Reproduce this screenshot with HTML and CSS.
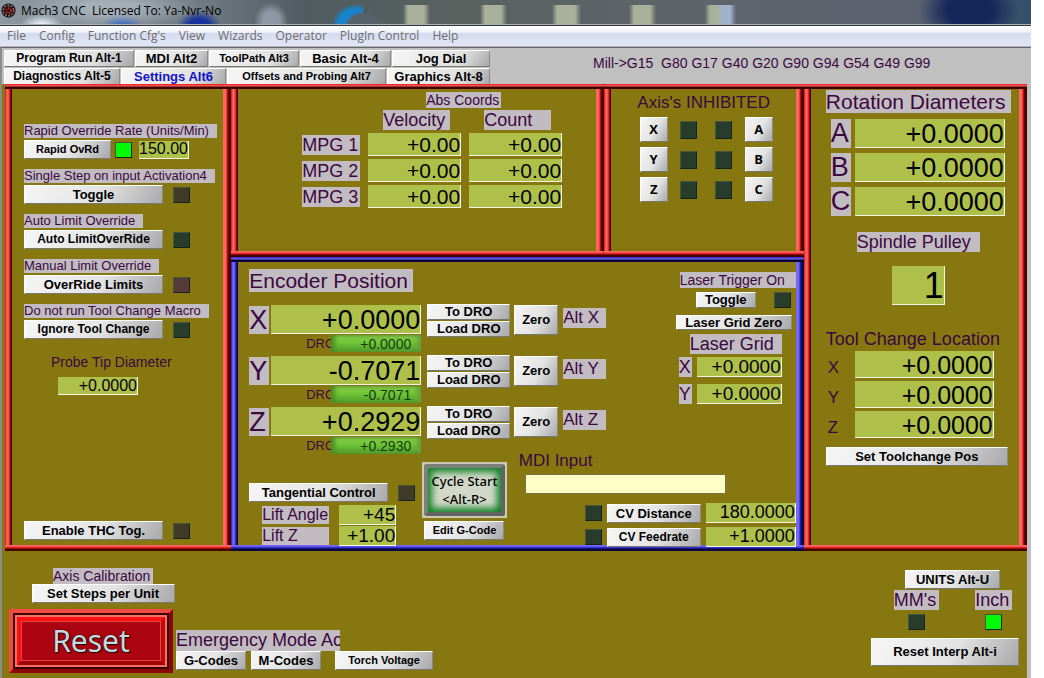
FILE: index.html
```
<!DOCTYPE html>
<html lang="en">
<head>
<meta charset="utf-8">
<title>Mach3 CNC</title>
<link rel="stylesheet" href="styles.css">
</head>
<body>
<div class="window">
  <header class="titlebar">
    <svg class="logo" viewBox="0 0 16 16" aria-hidden="true">
      <circle cx="8" cy="8" r="7.6" fill="#1c1414"/>
      <circle cx="8" cy="8" r="5.6" fill="none" stroke="#8d7f78" stroke-width="1.4" stroke-dasharray="2 1.5"/>
      <path d="M8 2.5 10 6l3.5 1.5L10.5 10 9 13.5 8 10.500 4 12l2-3.500L3 6l4 .5z" fill="#9c2020"/>
      <circle cx="8" cy="8" r="1.7" fill="#1c1010"/>
    </svg>
    <h1 class="title">Mach3 CNC&nbsp; Licensed To: Ya-Nvr-No</h1>
  </header>
  <nav class="menu">
    <a href="#">File</a><a href="#">Config</a><a href="#">Function Cfg's</a><a href="#">View</a><a href="#">Wizards</a><a href="#">Operator</a><a href="#">PlugIn Control</a><a href="#">Help</a>
  </nav>

  <div class="screen">
    <div class="toolbar">
      <div class="tabs">
        <div class="tab-row first">
          <button class="btn mid">Program Run Alt-1</button>
          <button class="btn">MDI Alt2</button>
          <button class="btn small">ToolPath Alt3</button>
          <button class="btn">Basic Alt-4</button>
          <button class="btn">Jog Dial</button>
        </div>
        <div class="tab-row second">
          <button class="btn mid">Diagnostics Alt-5</button>
          <button class="btn current">Settings Alt6</button>
          <button class="btn small">Offsets and Probing Alt7</button>
          <button class="btn">Graphics Alt-8</button>
        </div>
      </div>
      <div class="modes">Mill-&gt;G15&nbsp; G80 G17 G40 G20 G90 G94 G54 G49 G99</div>
    </div>

    <main class="panels">
      <section class="panel overrides">
        <div class="group">
          <label class="tag t13" for="rapid">Rapid Override Rate (Units/Min)</label>
          <div class="line">
            <button class="btn small rapid">Rapid OvRd</button>
            <span class="led on"></span>
            <input class="dro d16 rate" id="rapid" value="150.00">
          </div>
        </div>
        <div class="group">
          <span class="tag t13">Single Step on input Activation4</span>
          <div class="line"><button class="btn">Toggle</button><span class="led amber"></span></div>
        </div>
        <div class="group">
          <span class="tag t13">Auto Limit Override</span>
          <div class="line"><button class="btn mid">Auto LimitOverRide</button><span class="led"></span></div>
        </div>
        <div class="group">
          <span class="tag t13">Manual Limit Override</span>
          <div class="line"><button class="btn">OverRide Limits</button><span class="led red"></span></div>
        </div>
        <div class="group">
          <span class="tag t13">Do not run Tool Change Macro</span>
          <div class="line"><button class="btn mid">Ignore Tool Change</button><span class="led"></span></div>
        </div>
        <div class="probe">
          <label class="plain t14" for="probe">Probe Tip Diameter</label>
          <input class="dro d16" id="probe" value="+0.0000">
        </div>
        <div class="line thc"><button class="btn">Enable THC Tog.</button><span class="led amber"></span></div>
      </section>

      <div class="center">
        <section class="panel mpg">
          <span class="tag t14">Abs Coords</span>
          <table class="mpg-table">
            <thead>
              <tr><td></td><th scope="col"><span class="tag t18" id="vel">Velocity</span></th><th scope="col"><span class="tag t18" id="cnt">Count</span></th></tr>
            </thead>
            <tbody>
              <tr><th scope="row"><span class="tag t18" id="m1">MPG 1</span></th><td><input class="dro d21" aria-labelledby="m1 vel" value="+0.00"></td><td><input class="dro d21" aria-labelledby="m1 cnt" value="+0.00"></td></tr>
              <tr><th scope="row"><span class="tag t18" id="m2">MPG 2</span></th><td><input class="dro d21" aria-labelledby="m2 vel" value="+0.00"></td><td><input class="dro d21" aria-labelledby="m2 cnt" value="+0.00"></td></tr>
              <tr><th scope="row"><span class="tag t18" id="m3">MPG 3</span></th><td><input class="dro d21" aria-labelledby="m3 vel" value="+0.00"></td><td><input class="dro d21" aria-labelledby="m3 cnt" value="+0.00"></td></tr>
            </tbody>
          </table>
        </section>

        <section class="panel inhibit">
          <h2 class="plain t17">Axis's INHIBITED</h2>
          <div class="inhibit-grid">
            <button class="btn axis">X</button><span class="led"></span><span class="led"></span><button class="btn axis">A</button>
            <button class="btn axis">Y</button><span class="led"></span><span class="led"></span><button class="btn axis">B</button>
            <button class="btn axis">Z</button><span class="led"></span><span class="led"></span><button class="btn axis">C</button>
          </div>
        </section>

        <section class="panel blue encoder">
          <div class="enc-top">
            <div class="positions">
              <h2 class="tag t21">Encoder Position</h2>
              <div class="pos">
                <label class="tag letter" for="ex">X</label>
                <div class="readout">
                  <input class="dro d27" id="ex" value="+0.0000">
                  <div class="sub"><label class="plain" for="gx">DRO</label><input class="green" id="gx" value="+0.0000"></div>
                </div>
                <div class="stack"><button class="btn">To DRO</button><button class="btn">Load DRO</button></div>
                <button class="btn zero">Zero</button>
                <span class="tag t17">Alt X</span>
              </div>
              <div class="pos">
                <label class="tag letter" for="ey">Y</label>
                <div class="readout">
                  <input class="dro d27" id="ey" value="-0.7071">
                  <div class="sub"><label class="plain" for="gy">DRO</label><input class="green" id="gy" value="-0.7071"></div>
                </div>
                <div class="stack"><button class="btn">To DRO</button><button class="btn">Load DRO</button></div>
                <button class="btn zero">Zero</button>
                <span class="tag t17">Alt Y</span>
              </div>
              <div class="pos">
                <label class="tag letter" for="ez">Z</label>
                <div class="readout">
                  <input class="dro d27" id="ez" value="+0.2929">
                  <div class="sub"><label class="plain" for="gz">DRO</label><input class="green" id="gz" value="+0.2930"></div>
                </div>
                <div class="stack"><button class="btn">To DRO</button><button class="btn">Load DRO</button></div>
                <button class="btn zero">Zero</button>
                <span class="tag t17">Alt Z</span>
              </div>
            </div>
            <div class="laser">
              <span class="tag t14 trigger">Laser Trigger On</span>
              <div class="line laser-toggle"><button class="btn">Toggle</button><span class="led"></span></div>
              <button class="btn grid-zero">Laser Grid Zero</button>
              <h2 class="tag t18 grid-title">Laser Grid</h2>
              <div class="laser-row"><label class="tag t18" for="lx">X</label><input class="dro d19" id="lx" value="+0.0000"></div>
              <div class="laser-row"><label class="tag t18" for="ly">Y</label><input class="dro d19" id="ly" value="+0.0000"></div>
            </div>
          </div>
          <div class="enc-bottom">
            <div class="tangential">
              <div class="line"><button class="btn">Tangential Control</button><span class="led amber"></span></div>
              <div class="lift">
                <label class="tag t16" for="la">Lift Angle</label><input class="dro d19" id="la" value="+45">
                <label class="tag t16" for="lz">Lift Z</label><input class="dro d19" id="lz" value="+1.00">
              </div>
            </div>
            <div class="run">
              <button class="cycle"><span>Cycle Start<br>&lt;Alt-R&gt;</span></button>
              <button class="btn small">Edit G-Code</button>
            </div>
            <div class="mdi">
              <label class="plain t17" for="mdi">MDI Input</label>
              <input class="mdi-input" id="mdi">
              <div class="cv">
                <span class="led"></span><button class="btn" id="cvd">CV Distance</button><input class="dro d18" aria-labelledby="cvd" value="180.0000">
                <span class="led"></span><button class="btn mid" id="cvf">CV Feedrate</button><input class="dro d18" aria-labelledby="cvf" value="+1.0000">
              </div>
            </div>
          </div>
        </section>
      </div>

      <section class="panel rotation">
        <h2 class="tag t21">Rotation Diameters</h2>
        <div class="diameters">
          <label class="tag letter" for="ra">A</label><input class="dro d27" id="ra" value="+0.0000">
          <label class="tag letter" for="rb">B</label><input class="dro d27" id="rb" value="+0.0000">
          <label class="tag letter" for="rc">C</label><input class="dro d27" id="rc" value="+0.0000">
        </div>
        <label class="tag t18 pulley" for="sp">Spindle Pulley</label>
        <input class="dro d36" id="sp" value="1">
        <h2 class="plain t18 location">Tool Change Location</h2>
        <div class="toolchange">
          <label class="plain t17" for="tx">X</label><input class="dro d25" id="tx" value="+0.0000">
          <label class="plain t17" for="ty">Y</label><input class="dro d25" id="ty" value="+0.0000">
          <label class="plain t17" for="tz">Z</label><input class="dro d25" id="tz" value="+0.0000">
        </div>
        <button class="btn set-pos">Set Toolchange Pos</button>
      </section>
    </main>

    <footer class="bottom">
      <div class="calibration">
        <span class="tag t14">Axis Calibration</span>
        <button class="btn">Set Steps per Unit</button>
        <button class="reset"><span>Reset</span></button>
      </div>
      <div class="status">
        <div class="tag t18 message">Emergency Mode Ac</div>
        <div class="line"><button class="btn">G-Codes</button><button class="btn">M-Codes</button><button class="btn small torch">Torch Voltage</button></div>
      </div>
      <div class="units">
        <button class="btn">UNITS Alt-U</button>
        <div class="unit-row">
          <div class="unit"><span class="tag t18">MM's</span><span class="led"></span></div>
          <div class="unit"><span class="tag t18">Inch</span><span class="led on"></span></div>
        </div>
        <button class="btn interp">Reset Interp Alt-i</button>
      </div>
    </footer>
  </div>
</div>
</body>
</html>
```
FILE: styles.css
```
* { box-sizing: border-box; }

:root {
  --olive: #867711;
  --face: #c0c0c0;
  --ink: #3b083f;
  --lime: #afc04a;
}

body {
  margin: 0;
  padding-right: 13px;
  background: #fff;
  font-family: "Liberation Sans", Arial, sans-serif;
  color: #000;
}

h1, h2 { margin: 0; font-weight: 400; }
button, input { font-family: inherit; color: inherit; margin: 0; }
input { padding: 0; min-width: 0; border-radius: 0; }

.window {
  display: flex;
  flex-direction: column;
  min-height: 100vh;
}

/* title bar and menu */
.titlebar {
  display: flex;
  align-items: center;
  gap: 5px;
  height: 26px;
  padding: 0 0 4px 1px;
  border-bottom: 1px solid #33383d;
  box-shadow: inset 0 -1px #aab0b6;
  background:
    radial-gradient(ellipse 90px 20px at 110px 8px, #aeb9c2cc 30%, transparent 100%),
    radial-gradient(ellipse 22px 12px at 42px 26px, #e8eef4 20%, transparent 100%),
    radial-gradient(ellipse 20px 13px at 122px 26px, #2456b8 30%, transparent 100%),
    radial-gradient(ellipse 22px 15px at 199px 26px, #16329c 45%, transparent 100%),
    radial-gradient(ellipse 17px 20px at 271px 22px, #8e98a4 50%, transparent 100%),
    radial-gradient(ellipse 20px 16px at 363px 26px, #56626a 75%, transparent 90%),
    radial-gradient(ellipse 26px 23px at 356px 25px, #1784cc 70%, transparent 92%) 0 0 / 363px 100% no-repeat,
    linear-gradient(90deg, transparent 403px, #a9b19c 408px 424px, transparent 430px 480px, #a9b19c 485px 501px, transparent 507px 552px, #a9b19c 557px 575px, transparent 581px 629px, #a9b19c 634px 650px, transparent 656px 705px, #a9b19c 710px 718px, #9fb4cc 722px 730px, transparent 736px) 0 5px / 100% 20px no-repeat,
    radial-gradient(ellipse 50px 34px at 970px 10px, #14265a 45%, transparent 100%),
    linear-gradient(90deg, #8d979f, #6e7981 20%, #4f5b60 30%, #59625f 45%, #60646d 70%, #5c6270 88%, #35506a);
}
.logo { width: 15px; height: 15px; flex: none; }
.title { font: 12px/16px "Open Sans", sans-serif; color: #000; }
.menu {
  display: flex;
  gap: 13px;
  height: 21px;
  padding: 0 7px;
  border-bottom: 1px solid #aeb0b8;
  background: linear-gradient(#fff, #f1f3fa 30%, #d5dbef 38%, #e2e6f6);
}
.menu a { font: 12px/20px "Open Sans", sans-serif; color: #6d6d6d; text-decoration: none; }

.screen {
  flex: 1;
  display: flex;
  flex-direction: column;
  padding: 0 4px 0 0;
  border-top: 1px solid #666;
  border-left: 2px solid #8a8d8a;
  background: var(--face);
}

/* shared controls */
.btn {
  padding: 0 2px;
  border: 1px solid;
  border-color: #fff #8b8b85 #77776f #fff;
  background: linear-gradient(120deg, #f4f4f4 5%, #e3e3e3 55%, #a9a9ab);
  font-size: 13px;
  font-weight: 700;
  line-height: 17px;
  white-space: nowrap;
}
.btn.mid { font-size: 12px; }
.btn.small { font-size: 11px; }
.btn.axis { padding: 0; font: 700 13px/23px "Open Sans", sans-serif; }

.tag { display: inline-block; background: #c2bcc2; color: var(--ink); white-space: nowrap; overflow: hidden; }
.plain { color: var(--ink); white-space: nowrap; }
.t13 { font-size: 13px; line-height: 14px; padding-right: 8px; }
.t14 { font-size: 14px; line-height: 16px; }
.t16 { font-size: 16px; line-height: 18px; }
.t17 { font-size: 17px; line-height: 20px; }
.t18 { font-size: 18px; line-height: 20px; }
.t21 { font-size: 21px; line-height: 23px; }
.letter { font-size: 27px; line-height: 28px; width: 20px; }

.led {
  display: block;
  width: 17px;
  height: 16px;
  border: 1px solid;
  border-color: #49553b #16221a #16221a #49553b;
  background: #283c2c;
}
.led.on { background: #00fa08; }
.led.amber { background: #3f3b28; }
.led.red { background: #563a38; }

.dro {
  display: block;
  border: 0 solid #f1f2e8;
  border-width: 0 1px 1px 0;
  background: var(--lime);
  text-align: right;
}
.d16 { font-size: 16px; height: 18px; }
.d18 { font-size: 18px; height: 20px; }
.d19 { font-size: 19px; height: 20px; }
.d21 { font-size: 21px; height: 23px; width: 93px; padding-top: 2px; }
.d25 { font-size: 25px; height: 27px; padding-top: 2px; }
.d27 { font-size: 27px; height: 29px; width: 150px; padding-top: 2px; }
.d36 { font-size: 36px; height: 39px; width: 53px; padding-top: 2px; }

.line { display: flex; align-items: center; gap: 10px; }

/* beveled frame */
.panel {
  --hi: #fb6860;
  --mid: #e01212;
  --lo: #420000;
  background:
    linear-gradient(var(--mid), var(--hi) 2px, var(--lo) 3px, var(--lo)) top / 100% 5px no-repeat,
    linear-gradient(to top, var(--lo), var(--lo) 2px, var(--mid) 3px, var(--hi) 5px, var(--hi)) bottom / 100% 6px no-repeat,
    linear-gradient(to right, var(--mid), var(--hi) 2px, var(--hi) 3px, var(--mid) 5px, var(--lo) 6px) left / 7px 100% no-repeat,
    linear-gradient(to left, var(--lo), var(--lo) 2px, var(--mid) 4px, var(--hi) 5px, var(--hi)) right / 8px 100% no-repeat,
    var(--olive);
}
.panel.blue { --hi: #7468f4; --mid: #2620c0; --lo: #08063c; }

/* toolbar */
.toolbar { display: flex; height: 36px; padding: 2px 0 0 2px; }
.tabs { flex: none; width: 486px; display: grid; gap: 1px; align-content: start; }
.tab-row { display: grid; column-gap: 1px; }
.tab-row .btn { line-height: 15px; background: linear-gradient(120deg, #f4f4f4 5%, #e0e0e0 70%, #a9a9ab); }
.tab-row.first { grid-template-columns: 130fr 73fr 90fr 91fr 98fr; }
.tab-row.second { grid-template-columns: 116fr 105fr 159fr 103fr; }
.btn.current { color: #1212c8; }
.modes {
  flex: none;
  width: 342px;
  margin: 5px 0 0 103px;
  overflow: hidden;
  white-space: nowrap;
  font-size: 14px;
  line-height: 16px;
  color: var(--ink);
  align-self: flex-start;
}

.panels {
  display: grid;
  grid-template-columns: 226fr 572fr 223fr;
  padding-left: 3px;
  background: var(--olive);
}

/* overrides */
.overrides { display: flex; flex-direction: column; padding: 40px 10px 11px 19px; gap: 10px; }
.group { display: flex; flex-direction: column; align-items: flex-start; gap: 2px; }
.group .btn, .thc .btn { width: 139px; }
.group .rapid { width: 87px; }
.group .rapid + .led { margin: 0 -3px 0 -6px; }
.rate { width: 50px; }
.probe { display: flex; flex-direction: column; gap: 7px; padding: 5px 0 0 27px; }
.probe .dro { width: 80px; margin-left: 7px; }
.thc { margin-top: auto; }

/* center column */
.center { display: grid; grid-template-columns: 372fr 200fr; grid-template-rows: 173px auto; }
.mpg { padding: 8px 0 0 63px; }
.mpg > .tag { margin-left: 132px; padding-right: 1px; display: block; width: 75px; }
.mpg-table { border-spacing: 8px 3px; margin-top: -1px; }
.mpg-table td, .mpg-table th { padding: 0; text-align: left; font-weight: 400; vertical-align: middle; }
.mpg-table .tag { display: block; width: 58px; }
.mpg-table thead .tag { width: 67px; margin-left: 15px; }

.inhibit { display: flex; flex-direction: column; align-items: center; padding: 9px 0 0; }
.inhibit-grid {
  display: grid;
  grid-template-columns: 28px 28px 28px 28px;
  justify-items: center;
  align-items: center;
  column-gap: 7px;
  row-gap: 5px;
  margin-top: 4px;
  padding-left: 5px;
}
.inhibit-grid .led { height: 18px; }
.inhibit-grid .axis { width: 28px; }

.encoder { grid-column: 1 / -1; padding: 12px 8px 4px 18px; }
.enc-top { display: flex; justify-content: space-between; }
.positions .t21 { display: block; width: 164px; margin-bottom: 12px; }
.pos { display: flex; align-items: flex-start; height: 47px; }
.pos + .pos { margin-top: 4px; }
.pos > .letter { margin: 2px 2px 0 0; }
.readout { margin: 1px 6px 0 0; }
.sub { display: flex; justify-content: flex-end; align-items: center; margin-top: 1px; }
.sub label { width: 25px; overflow: hidden; font-size: 13px; line-height: 16px; }
.green {
  width: 90px;
  height: 17px;
  padding-right: 10px;
  border: 0;
  background: linear-gradient(#8fd04e, #6fc437 45%, #4f9c2a);
  box-shadow: inset 4px 0 4px #4c8d24, inset -4px 0 4px #6aa23a;
  color: #123c0c;
  font-size: 14px;
  text-align: right;
}
.stack { display: grid; gap: 1px; width: 83px; margin-right: 4px; }
.stack .btn { line-height: 14px; }
.zero { width: 44px; align-self: flex-start; margin: 1px 5px 0 0; line-height: 28px; }
.pos > .t17 { width: 43px; margin-top: 4px; }

.laser { display: flex; flex-direction: column; align-items: flex-start; padding: 3px 0 0; }
.laser .trigger { margin-left: 4px; width: 116px; }
.laser-toggle { margin: 4px 0 7px 20px; gap: 18px; }
.laser-toggle .btn { width: 60px; line-height: 14px; }
.grid-zero { width: 116px; line-height: 13px; }
.grid-title { margin: 4px 0 3px 14px; width: 92px; }
.laser-row { display: flex; gap: 5px; margin: 0 0 7px 3px; }
.laser-row .tag { width: 13px; }
.laser-row .dro { width: 85px; }

.enc-bottom { display: flex; justify-content: space-between; align-items: flex-start; }
.tangential { padding-top: 30px; }
.tangential .btn { width: 139px; }
.lift {
  display: grid;
  grid-template-columns: 67px 57px;
  column-gap: 10px;
  row-gap: 1px;
  align-items: center;
  margin: 3px 0 0 13px;
}
.run { display: flex; flex-direction: column; align-items: center; gap: 3px; padding-top: 9px; }
.run .btn { width: 80px; }
.cycle {
  width: 85px;
  padding: 0;
  border: 2px solid #cdc8b4;
  background: #cdc8b4;
}
.cycle span {
  display: block;
  padding: 4px 0;
  border: 4px solid;
  border-color: #7b8079 #60655f #60655f #7b8079;
  border-radius: 3px;
  background: #d2d8c8;
  box-shadow: inset 0 0 7px 4px #118026;
  font: 500 13px/18px "Noto Sans", sans-serif;
  white-space: nowrap;
}
.mdi { width: 282px; display: flex; flex-direction: column; align-items: flex-start; }
.mdi > label { margin: -2px 0 0 5px; }
.mdi-input { width: 201px; height: 20px; margin: 3px 0 9px 11px; border: 1px solid #77704a; background: #fdffc4; }
.cv {
  display: grid;
  grid-template-columns: 17px 94px 90px;
  gap: 4px;
  column-gap: 5px;
  align-self: flex-end;
  align-items: center;
}

/* rotation panel */
.rotation { padding: 6px 8px 0 22px; display: flex; flex-direction: column; align-items: flex-start; }
.rotation > .t21 { width: 185px; }
.diameters { display: grid; grid-template-columns: 20px 150px; gap: 5px 4px; margin: 6px 0 0 5px; }
.pulley { width: 123px; margin: 16px 0 14px 31px; }
.rotation .d36 { margin-left: 66px; }
.location { margin-top: 24px; }
.toolchange { display: grid; grid-template-columns: 26px 139px; gap: 3px 3px; align-items: center; padding-top: 2px; }
.toolchange label { padding: 6px 0 0 2px; line-height: 18px; }
.set-pos { width: 182px; margin-top: 9px; }

/* bottom strip */
.bottom {
  flex: 1;
  display: flex;
  align-items: flex-start;
  padding: 17px 8px 0 7px;
  background: var(--olive);
}
.calibration { width: 164px; display: flex; flex-direction: column; align-items: center; }
.calibration .t14 { width: 100px; margin-left: 24px; }
.calibration .btn { width: 143px; margin-left: 24px; }
.reset {
  width: 164px;
  margin-top: 6px;
  padding: 3px;
  border: 4px solid;
  border-color: #f04a42 #8c0808 #8c0808 #f04a42;
  background: #3c0000;
}
.reset span {
  display: block;
  border: 5px solid;
  border-color: #ff1010 #c40808 #a00404 #ff1010;
  outline: 2px solid #f0706a;
  outline-offset: -1px;
  background: #ac0410;
  box-shadow: inset 0 0 0 1px #e04848;
  font: 30px/40px "Noto Sans", sans-serif;
  color: #c3dade;
  text-shadow: 0 0 2px #200000, 1px 1px 1px #200000;
}
.status { padding: 62px 0 0 3px; }
.message { width: 164px; line-height: 21px; display: block; }
.status .line { gap: 5px; }
.status .btn { width: 70px; }
.status .torch { width: 98px; margin-left: 9px; }
.units { display: flex; flex-direction: column; align-items: center; margin-left: auto; padding-top: 2px; }
.units > .btn:first-child { width: 95px; margin-left: 15px; }
.unit-row { display: flex; gap: 36px; margin: 1px 0 8px 16px; }
.unit { display: flex; flex-direction: column; align-items: center; gap: 4px; }
.unit .tag { padding-right: 3px; }
.interp { width: 148px; line-height: 26px; }
```
